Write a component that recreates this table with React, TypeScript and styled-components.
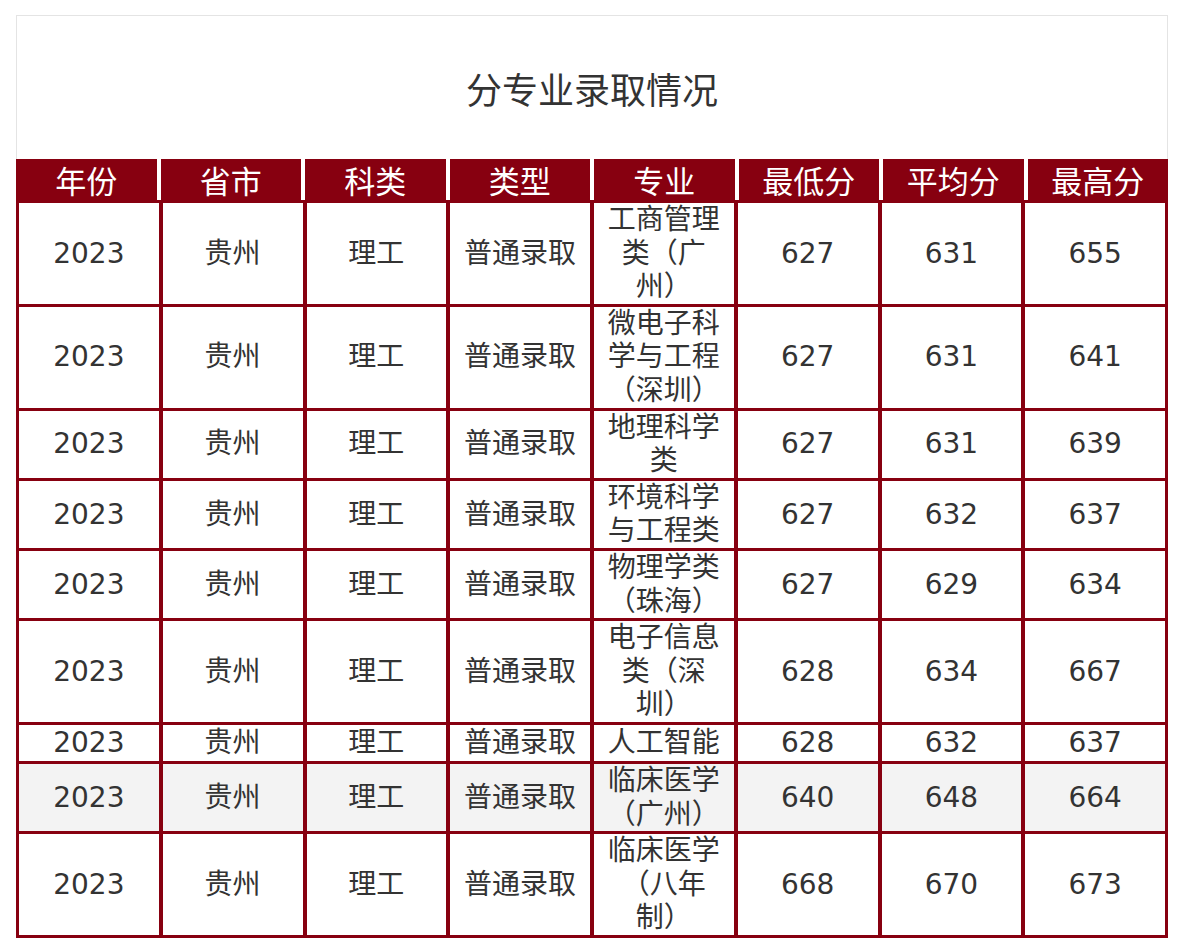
import styled, { createGlobalStyle } from 'styled-components';

const RED = '#870010';

const GlobalStyle = createGlobalStyle`
  html, body {
    margin: 0;
    padding: 0;
    background: #ffffff;
  }
  body {
    font-family: "DejaVu Sans", "Noto Sans CJK SC", sans-serif;
    text-spacing-trim: space-all;
  }
`;

const columns = ['年份', '省市', '科类', '类型', '专业', '最低分', '平均分', '最高分'];

type Row = {
  major: string;
  min: number;
  avg: number;
  max: number;
  highlight?: boolean;
};

const rows: Row[] = [
  { major: '工商管理类（广州）', min: 627, avg: 631, max: 655 },
  { major: '微电子科学与工程（深圳）', min: 627, avg: 631, max: 641 },
  { major: '地理科学类', min: 627, avg: 631, max: 639 },
  { major: '环境科学与工程类', min: 627, avg: 632, max: 637 },
  { major: '物理学类（珠海）', min: 627, avg: 629, max: 634 },
  { major: '电子信息类（深圳）', min: 628, avg: 634, max: 667 },
  { major: '人工智能', min: 628, avg: 632, max: 637 },
  { major: '临床医学（广州）', min: 640, avg: 648, max: 664, highlight: true },
  { major: '临床医学（八年制）', min: 668, avg: 670, max: 673 },
];

function App() {
  return (
    <Page>
      <GlobalStyle />
      <Card>
        <TitleBar>分专业录取情况</TitleBar>
        <HeadRow>
          {columns.map((c) => (
            <HeadCell key={c}>{c}</HeadCell>
          ))}
        </HeadRow>
        <Body>
          {rows.map((r, i) => (
            <BodyRow key={i}>
              <Cell $shade={r.highlight}>2023</Cell>
              <Cell $shade={r.highlight}>贵州</Cell>
              <Cell $shade={r.highlight}>理工</Cell>
              <Cell $shade={r.highlight}>普通录取</Cell>
              <Cell $shade={r.highlight}>{r.major}</Cell>
              <Cell $shade={r.highlight}>{r.min}</Cell>
              <Cell $shade={r.highlight}>{r.avg}</Cell>
              <Cell $shade={r.highlight}>{r.max}</Cell>
            </BodyRow>
          ))}
        </Body>
      </Card>
    </Page>
  );
}

export default App;

const Page = styled.div`
  padding: 15px 16px;
`;

const Card = styled.div`
  width: 1152px;
`;

const TitleBar = styled.div`
  height: 144px;
  box-sizing: border-box;
  border: 1px solid #e4e4e4;
  border-bottom: none;
  display: flex;
  align-items: center;
  justify-content: center;
  font-family: "Noto Sans CJK SC", sans-serif;
  font-size: 36px;
  color: #333333;
`;

const HeadRow = styled.div`
  display: grid;
  grid-template-columns: repeat(8, 1fr);
  column-gap: 4px;
  background: #ffffff;
`;

const HeadCell = styled.div`
  height: 41px;
  line-height: 41px;
  background: ${RED};
  color: #ffffff;
  text-align: center;
  font-family: "Noto Sans CJK SC", sans-serif;
  font-size: 31px;
`;

const Body = styled.div`
  display: grid;
  grid-template-columns: repeat(8, 1fr);
  row-gap: 3px;
  column-gap: 4px;
  padding: 3px;
  background: ${RED};
`;

const BodyRow = styled.div`
  display: contents;
`;

const Cell = styled.div<{ $shade?: boolean }>`
  display: flex;
  align-items: center;
  justify-content: center;
  min-height: 36px;
  text-align: center;
  padding: 0 2px;
  background: ${(p) => (p.$shade ? '#f3f3f3' : '#ffffff')};
  color: #333333;
  font-size: 28px;
  line-height: 33.6px;
  word-break: break-all;
  text-spacing-trim: space-all;
`;
